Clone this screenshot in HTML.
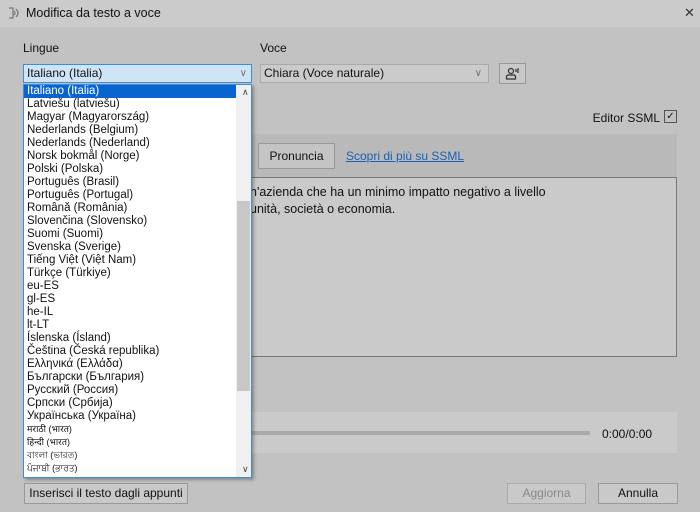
<!DOCTYPE html>
<html><head><meta charset="utf-8"><style>
*{margin:0;padding:0;box-sizing:border-box}
body{width:700px;height:512px;background:#c2c2c2;font-family:"Liberation Sans","DejaVu Sans",sans-serif;font-size:12px;color:#111;position:relative;overflow:hidden}
.a{position:absolute}
.btn{position:absolute;background:#c9c9c9;border:1px solid #999;text-align:center;line-height:20px;font-size:12px}
.list div{height:13px;line-height:13px;padding-left:3px;white-space:nowrap;font-size:11.5px}
</style></head><body>
<div class="a" style="left:0;top:0;width:700px;height:27px;background:#cbcbcb"></div>
<svg class="a" style="left:7px;top:6px" width="14" height="14" viewBox="0 0 14 14"><path d="M2 2h4v10H2M7 5q2 2 0 4M9 3q4 4 0 8" fill="none" stroke="#777" stroke-width="1.2"/></svg>
<div class="a" style="left:26px;top:6px;font-size:12.5px">Modifica da testo a voce</div>
<div class="a" style="left:684px;top:5px;font-size:13px;color:#333">✕</div>

<div class="a" style="left:23px;top:41px">Lingue</div>
<div class="a" style="left:260px;top:41px">Voce</div>
<div class="a" style="left:23px;top:64px;width:229px;height:19px;background:#cfe4f7;border:1px solid #3c8fd6;padding-left:3px;line-height:17px">Italiano (Italia)<span style="position:absolute;right:4px;color:#777;font-size:10px">∨</span></div>
<div class="a" style="left:260px;top:64px;width:229px;height:19px;background:#cbcbcb;border:1px solid #aaa;padding-left:3px;line-height:17px">Chiara (Voce naturale)<span style="position:absolute;right:6px;color:#777;font-size:10px">∨</span></div>
<div class="btn" style="left:499px;top:63px;width:27px;height:21px"></div>
<svg class="a" style="left:505px;top:66px" width="15" height="15" viewBox="0 0 15 15"><circle cx="6" cy="5" r="2.5" fill="none" stroke="#333" stroke-width="1.2"/><path d="M1.5 13v-2q0-2 2-2h5q2 0 2 2v2z" fill="none" stroke="#333" stroke-width="1.2"/><path d="M11 3v3M13 2v5" stroke="#333" stroke-width="1.2"/></svg>

<div class="a" style="right:40px;top:111px;white-space:nowrap">Editor SSML</div>
<div class="a" style="left:664px;top:110px;width:13px;height:13px;border:1px solid #555;font-size:10px;line-height:11px;text-align:center">✓</div>

<div class="a" style="left:23px;top:134px;width:654px;height:44px;background:#b9b9b9"></div>
<div class="btn" style="left:258px;top:143px;width:77px;height:26px;line-height:24px;background:#c4c4c4">Pronuncia</div>
<div class="a" style="left:346px;top:149px;color:#1d5fb5;text-decoration:underline">Scopri di più su SSML</div>
<div class="a" style="left:23px;top:177px;width:654px;height:180px;background:#cacaca;border:1px solid #777"></div>
<div class="a" style="left:250px;top:184px;font-size:12.5px;line-height:17px">n'azienda che ha un minimo impatto negativo a livello<br>unità, società o economia.</div>

<div class="a" style="left:23px;top:412px;width:654px;height:41px;background:#cacaca"></div>
<div class="a" style="left:250px;top:431px;width:340px;height:4px;background:#a9a9a9"></div>
<div class="a" style="left:602px;top:427px">0:00/0:00</div>

<div class="btn" style="left:24px;top:483px;width:164px;height:21px;line-height:19px">Inserisci il testo dagli appunti</div>
<div class="btn" style="left:507px;top:483px;width:79px;height:21px;line-height:19px;color:#888;border-color:#aaa">Aggiorna</div>
<div class="btn" style="left:598px;top:483px;width:80px;height:21px;line-height:19px">Annulla</div>

<div class="a list" style="left:23px;top:84px;width:229px;height:394px;background:#fff;border:1px solid #3c8fd6;box-shadow:2px 2px 3px rgba(0,0,0,.3);padding-top:0">
<div style="background:#0a64d0;color:#fff;width:212px">Italiano (Italia)</div>
<div>Latviešu (latviešu)</div><div>Magyar (Magyarország)</div><div>Nederlands (Belgium)</div><div>Nederlands (Nederland)</div><div>Norsk bokmål (Norge)</div><div>Polski (Polska)</div><div>Português (Brasil)</div><div>Português (Portugal)</div><div>Română (România)</div><div>Slovenčina (Slovensko)</div><div>Suomi (Suomi)</div><div>Svenska (Sverige)</div><div>Tiếng Việt (Việt Nam)</div><div>Türkçe (Türkiye)</div><div>eu-ES</div><div>gl-ES</div><div>he-IL</div><div>lt-LT</div><div>Íslenska (Ísland)</div><div>Čeština (Česká republika)</div><div>Ελληνικά (Ελλάδα)</div><div>Български (България)</div><div>Русский (Россия)</div><div>Српски (Србија)</div><div>Українська (Україна)</div><div style="font-size:9px">मराठी (भारत)</div><div style="font-size:9px">हिन्दी (भारत)</div><div style="font-size:9px">বাংলা (ভারত)</div><div style="font-size:9px">ਪੰਜਾਬੀ (ਭਾਰਤ)</div>
<div class="a" style="left:212px;top:0;width:15px;height:392px;background:#f0f0f0"></div>
<div class="a" style="left:213px;top:116px;width:13px;height:190px;background:#c8c8c8"></div>
<div class="a" style="left:215px;top:1px;font-size:9px;color:#444">∧</div>
<div class="a" style="left:215px;top:378px;font-size:9px;color:#444">∨</div>
</div>
</body></html>
